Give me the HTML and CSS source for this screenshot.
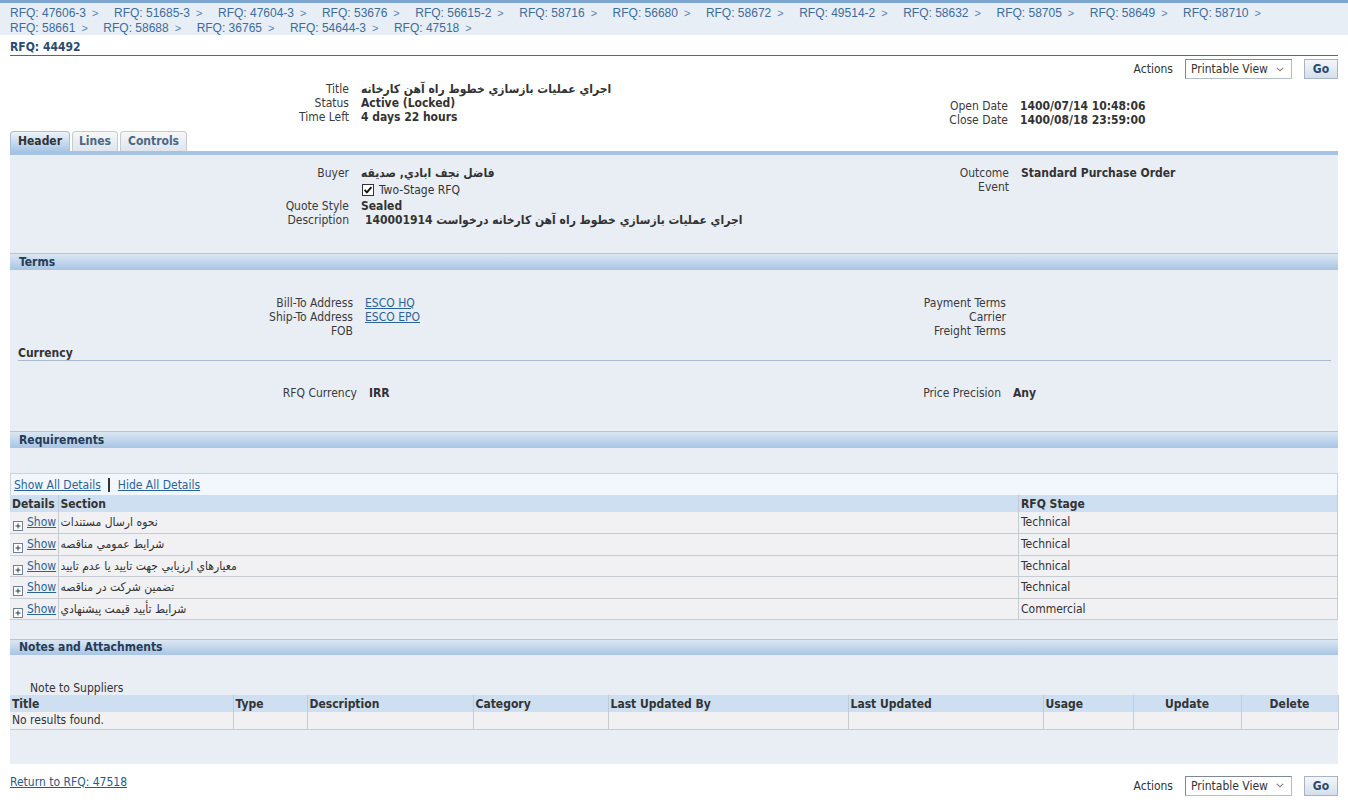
FILE: index.html
```html
<!DOCTYPE html>
<html lang="en">
<head>
<meta charset="utf-8">
<title>RFQ: 44492</title>
<link rel="stylesheet" href="styles.css">
</head>
<body>
<nav class="crumbs">
  <span class="crumb"><a>RFQ: 47606-3</a><span class="sep">&gt;</span></span>
  <span class="crumb"><a>RFQ: 51685-3</a><span class="sep">&gt;</span></span>
  <span class="crumb"><a>RFQ: 47604-3</a><span class="sep">&gt;</span></span>
  <span class="crumb"><a>RFQ: 53676</a><span class="sep">&gt;</span></span>
  <span class="crumb"><a>RFQ: 56615-2</a><span class="sep">&gt;</span></span>
  <span class="crumb"><a>RFQ: 58716</a><span class="sep">&gt;</span></span>
  <span class="crumb"><a>RFQ: 56680</a><span class="sep">&gt;</span></span>
  <span class="crumb"><a>RFQ: 58672</a><span class="sep">&gt;</span></span>
  <span class="crumb"><a>RFQ: 49514-2</a><span class="sep">&gt;</span></span>
  <span class="crumb"><a>RFQ: 58632</a><span class="sep">&gt;</span></span>
  <span class="crumb"><a>RFQ: 58705</a><span class="sep">&gt;</span></span>
  <span class="crumb"><a>RFQ: 58649</a><span class="sep">&gt;</span></span>
  <span class="crumb"><a>RFQ: 58710</a><span class="sep">&gt;</span></span>
  <span class="crumb"><a>RFQ: 58661</a><span class="sep">&gt;</span></span>
  <span class="crumb"><a>RFQ: 58688</a><span class="sep">&gt;</span></span>
  <span class="crumb"><a>RFQ: 36765</a><span class="sep">&gt;</span></span>
  <span class="crumb"><a>RFQ: 54644-3</a><span class="sep">&gt;</span></span>
  <span class="crumb"><a>RFQ: 47518</a><span class="sep">&gt;</span></span>
</nav>

<main class="page">
  <h1 class="page-title">RFQ: 44492</h1>

  <div class="actions">
    <span class="actions-label">Actions</span>
    <div class="select"><span>Printable View</span><svg class="chev" width="8" height="5" viewBox="0 0 8 5"><path d="M0.8 0.8 L4 3.8 L7.2 0.8" fill="none" stroke="#7a7a7a" stroke-width="1.1"/></svg></div>
    <button class="go">Go</button>
  </div>

  <div class="fields summary">
    <div class="kv">
      <span class="lbl">Title</span><span class="val">اجراي عمليات بازسازي خطوط راه آهن کارخانه</span>
      <span class="lbl">Status</span><span class="val">Active (Locked)</span>
      <span class="lbl">Time Left</span><span class="val">4 days 22 hours</span>
    </div>
    <div class="kv kv-right">
      <span class="lbl">Open Date</span><span class="val">1400/07/14 10:48:06</span>
      <span class="lbl">Close Date</span><span class="val">1400/08/18 23:59:00</span>
    </div>
  </div>

  <div class="tabs">
    <span class="tab tab-active tab-header">Header</span>
    <span class="tab tab-lines">Lines</span>
    <span class="tab tab-controls">Controls</span>
  </div>
  <div class="tabline"></div>

  <section class="panel">
    <div class="fields hdr">
      <div class="kv">
        <span class="lbl">Buyer</span><span class="val">فاضل نجف ابادي, صديقه</span>
        <span class="lbl cbrow"></span><span class="cbrow check"><svg width="12" height="12" viewBox="0 0 12 12"><rect x="0.5" y="0.5" width="11" height="11" fill="#fff" stroke="#333"/><path d="M2.6 5.8 L4.9 8.3 L9.4 3.2" fill="none" stroke="#111" stroke-width="1.9"/></svg><span>Two-Stage RFQ</span></span>
        <span class="lbl">Quote Style</span><span class="val">Sealed</span>
        <span class="lbl">Description</span><span class="val desc">اجراي عمليات بازسازي خطوط راه آهن کارخانه درخواست 140001914</span>
      </div>
      <div class="kv kv-right">
        <span class="lbl">Outcome</span><span class="val">Standard Purchase Order</span>
        <span class="lbl">Event</span><span class="val"></span>
      </div>
    </div>

    <h2 class="bar bar-terms">Terms</h2>
    <div class="fields terms">
      <div class="kv">
        <span class="lbl">Bill-To Address</span><a class="link">ESCO HQ</a>
        <span class="lbl">Ship-To Address</span><a class="link">ESCO EPO</a>
        <span class="lbl">FOB</span><span></span>
      </div>
      <div class="kv kv-right">
        <span class="lbl">Payment Terms</span><span></span>
        <span class="lbl">Carrier</span><span></span>
        <span class="lbl">Freight Terms</span><span></span>
      </div>
    </div>

    <h3 class="sub">Currency</h3>
    <div class="fields cur">
      <div class="kv">
        <span class="lbl">RFQ Currency</span><span class="val">IRR</span>
      </div>
      <div class="kv kv-right">
        <span class="lbl">Price Precision</span><span class="val">Any</span>
      </div>
    </div>

    <h2 class="bar bar-req">Requirements</h2>
    <div class="req">
      <div class="detail-links"><a class="link">Show All Details</a><span class="vsep"></span><a class="link">Hide All Details</a></div>
      <table class="grid req-table">
        <colgroup><col class="c-details"><col><col class="c-stage"></colgroup>
        <thead><tr><th>Details</th><th>Section</th><th>RFQ Stage</th></tr></thead>
        <tbody>
          <tr><td class="show"><svg class="plus" width="10" height="10" viewBox="0 0 10 10"><rect x="0.5" y="0.5" width="9" height="9" fill="#fff" stroke="#6f8296"/><path d="M2.5 5 H7.5 M5 2.5 V7.5" stroke="#2b3a4a" stroke-width="1"/></svg><a class="link">Show</a></td><td>نحوه ارسال مستندات</td><td>Technical</td></tr>
          <tr><td class="show"><svg class="plus" width="10" height="10" viewBox="0 0 10 10"><rect x="0.5" y="0.5" width="9" height="9" fill="#fff" stroke="#6f8296"/><path d="M2.5 5 H7.5 M5 2.5 V7.5" stroke="#2b3a4a" stroke-width="1"/></svg><a class="link">Show</a></td><td>شرايط عمومي مناقصه</td><td>Technical</td></tr>
          <tr><td class="show"><svg class="plus" width="10" height="10" viewBox="0 0 10 10"><rect x="0.5" y="0.5" width="9" height="9" fill="#fff" stroke="#6f8296"/><path d="M2.5 5 H7.5 M5 2.5 V7.5" stroke="#2b3a4a" stroke-width="1"/></svg><a class="link">Show</a></td><td>معيارهاي ارزيابي جهت تاييد يا عدم تاييد</td><td>Technical</td></tr>
          <tr><td class="show"><svg class="plus" width="10" height="10" viewBox="0 0 10 10"><rect x="0.5" y="0.5" width="9" height="9" fill="#fff" stroke="#6f8296"/><path d="M2.5 5 H7.5 M5 2.5 V7.5" stroke="#2b3a4a" stroke-width="1"/></svg><a class="link">Show</a></td><td>تضمين شرکت در مناقصه</td><td>Technical</td></tr>
          <tr><td class="show"><svg class="plus" width="10" height="10" viewBox="0 0 10 10"><rect x="0.5" y="0.5" width="9" height="9" fill="#fff" stroke="#6f8296"/><path d="M2.5 5 H7.5 M5 2.5 V7.5" stroke="#2b3a4a" stroke-width="1"/></svg><a class="link">Show</a></td><td>شرايط تأييد قيمت پيشنهادي</td><td>Commercial</td></tr>
        </tbody>
      </table>
    </div>

    <h2 class="bar bar-notes">Notes and Attachments</h2>
    <div class="notes">
      <div class="note-label">Note to Suppliers</div>
      <table class="grid notes-table">
        <colgroup>
          <col class="n-title"><col class="n-type"><col class="n-desc"><col class="n-cat"><col class="n-lub"><col class="n-lu"><col class="n-usage"><col class="n-upd"><col class="n-del">
        </colgroup>
        <thead><tr><th>Title</th><th>Type</th><th>Description</th><th>Category</th><th>Last Updated By</th><th>Last Updated</th><th>Usage</th><th class="center">Update</th><th class="center">Delete</th></tr></thead>
        <tbody><tr><td>No results found.</td><td></td><td></td><td></td><td></td><td></td><td></td><td></td><td></td></tr></tbody>
      </table>
    </div>
  </section>

  <div class="footer">
    <a class="link return">Return to RFQ: 47518</a>
    <div class="actions actions-bottom">
      <span class="actions-label">Actions</span>
      <div class="select"><span>Printable View</span><svg class="chev" width="8" height="5" viewBox="0 0 8 5"><path d="M0.8 0.8 L4 3.8 L7.2 0.8" fill="none" stroke="#7a7a7a" stroke-width="1.1"/></svg></div>
      <button class="go">Go</button>
    </div>
  </div>
</main>
</body>
</html>
```

FILE: styles.css
```css
* { box-sizing: border-box; }

body {
  margin: 0;
  background: #fff;
  color: #333;
  font-family: Tahoma, "DejaVu Sans Condensed", "DejaVu Sans", "Liberation Sans", sans-serif;
  font-size: 12px;
  line-height: 14px;
}

/* breadcrumbs */
.crumbs {
  border-top: 3px solid #7ea6d2;
  background: #e8eef6;
  padding: 3px 10px 0;
  display: flex;
  flex-wrap: wrap;
  column-gap: 15.5px;
  font-family: "Liberation Sans", Arial, sans-serif;
  font-size: 12px;
  line-height: 14.5px;
  color: #3b6d9d;
}
.crumb a { color: #3b6d9d; }
.crumb .sep { margin-left: 6px; font-size: 11px; color: #5a83ab; }

.page { padding: 0 10px; }

.page-title {
  margin: 4px 0 0;
  font-size: 12px;
  line-height: 16px;
  font-weight: bold;
  color: #2c4b6f;
  border-bottom: 1px solid #56677b;
}

/* actions */
.actions {
  display: flex;
  justify-content: flex-end;
  align-items: center;
  gap: 12px;
  margin-top: 3px;
  height: 20px;
}
.actions-label { color: #333; }
.select {
  width: 107px;
  height: 20px;
  display: flex;
  align-items: center;
  justify-content: space-between;
  padding: 0 7px 0 5px;
  background: #fff;
  border: 1px solid #b4bcc5;
  border-top-color: #7d8995;
  border-left-color: #7d8995;
  color: #333;
}
.go {
  width: 34px;
  height: 20px;
  padding: 0;
  border: 1px solid #a6b4c3;
  background: linear-gradient(#f3f7fb, #d4dfeb);
  font-family: inherit;
  font-size: 12px;
  font-weight: bold;
  color: #2b4a6c;
}

/* label/value layouts */
.fields {
  display: grid;
  grid-template-columns: minmax(0, 1fr) minmax(0, 1fr);
}
.kv {
  display: grid;
  grid-template-columns: var(--lw) minmax(0, auto);
  column-gap: 12px;
  align-content: start;
  min-width: 0;
}
.lbl { text-align: right; color: #3a3a3a; white-space: nowrap; }
.val { font-weight: bold; color: #333; white-space: nowrap; }
.link { color: #2a6497; text-decoration: underline; cursor: pointer; }

.summary { margin-top: 3px; }
.summary .kv { --lw: 339px; }
.summary .kv-right { --lw: 334px; margin-top: 17px; }

/* tabs */
.tabs {
  display: flex;
  gap: 2px;
  margin-top: 4px;
  height: 20px;
}
.tab {
  height: 20px;
  border: 1px solid #c3cbd4;
  border-bottom: none;
  border-radius: 4px 4px 0 0;
  background: linear-gradient(#f6f7f8, #dfe5ec);
  font-weight: bold;
  color: #4a6887;
  text-align: center;
  line-height: 19px;
}
.tab-active {
  border-color: #a8bfd8;
  background: linear-gradient(#eef4fa, #a9c6e4);
  color: #333;
}
.tab-header { width: 60px; }
.tab-lines { width: 46px; }
.tab-controls { width: 67px; }
.tabline { height: 4px; background: #a6c3e2; }

/* panel */
.panel { background: #e9eef5; }

.hdr { padding-top: 11px; }
.hdr .kv { --lw: 339px; }
.hdr .kv-right { --lw: 335px; }
.cbrow { height: 19px; }
.check { display: flex; align-items: center; gap: 5px; padding-left: 1px; color: #333; }
.desc { padding-left: 4px; }

.bar {
  margin: 0;
  height: 17px;
  border-top: 1px solid #b3c6da;
  background: linear-gradient(#dbe7f3, #a8c5e4);
  padding-left: 9px;
  font-size: 12px;
  line-height: 16px;
  font-weight: bold;
  color: #253c57;
}
.bar-terms { margin-top: 26px; }

.terms { margin-top: 26px; }
.terms .kv { --lw: 343px; }
.terms .kv-right { --lw: 332px; }

.sub {
  margin: 8px 7px 0 8px;
  font-size: 12px;
  line-height: 14px;
  font-weight: bold;
  color: #333;
  border-bottom: 1px solid #a7b9cc;
}

.cur { margin-top: 25px; }
.cur .kv { --lw: 347px; }
.cur .kv-right { --lw: 327px; }

.bar-req { margin-top: 31px; }

.req { padding-top: 25px; }
.detail-links {
  height: 22px;
  display: flex;
  align-items: center;
  padding-left: 3px;
  background: #f2f7fd;
  border: 1px solid #c9d4df;
  border-bottom: none;
}
.vsep {
  display: inline-block;
  width: 2px;
  height: 14px;
  background: #333;
  margin: 0 8px 0 7px;
}

.grid {
  width: 100%;
  border-collapse: collapse;
  table-layout: fixed;
}
.grid th {
  background: #cddff1;
  text-align: left;
  font-weight: bold;
  color: #333;
  padding: 0 2px;
  height: 17px;
  border-left: 1px solid #c2cbd5;
  white-space: nowrap;
}
.grid th:first-child, .grid td:first-child { border-left: none; }
.grid td {
  background: #f1f1f3;
  border-left: 1px solid #c6ccd4;
  border-bottom: 1px solid #c6ccd4;
  padding: 1px 2px 0;
  vertical-align: top;
  white-space: nowrap;
  overflow: visible;
  color: #333;
}
.grid tr > :last-child { border-right: 1px solid #c6ccd4; }
.grid th.center { text-align: center; }

.req-table td { height: 21.5px; padding-top: 3px; }
.c-details { width: 48px; }
.c-stage { width: 319px; }
.show { padding-left: 3px !important; padding-right: 0 !important; }
.plus { vertical-align: -5px; margin-right: 4px; }

.bar-notes { margin-top: 19px; height: 16px; line-height: 15px; }
.notes { padding: 26px 0 34px; }
.note-label { padding-left: 20px; height: 14px; color: #333; }
.notes-table td { height: 17px; padding-top: 1px; }
.n-title { width: 223px; }
.n-type { width: 74px; }
.n-desc { width: 166px; }
.n-cat { width: 135px; }
.n-lub { width: 240px; }
.n-lu { width: 195px; }
.n-usage { width: 90px; }
.n-upd { width: 108px; }
.n-del { width: 97px; }

/* footer */
.footer {
  display: flex;
  justify-content: space-between;
  align-items: flex-start;
  margin-top: 12px;
}
.return { color: #1f5b8b; margin-top: -1px; }
.actions-bottom { margin-top: 0; }
```
